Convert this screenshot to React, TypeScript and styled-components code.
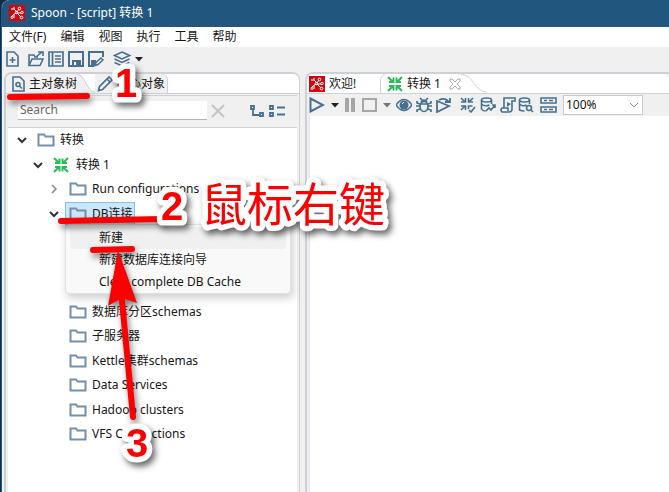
import React from "react";
import styled, { createGlobalStyle } from "styled-components";

const BLUE = "#47708f";
const LINE = "#cfcfd6";
const RED = "#fb0000";

const GlobalStyle = createGlobalStyle`
  *, *::before, *::after { box-sizing: border-box; }
  body {
    margin: 0;
    background: #1b2b3f;
    font: 12px/16px "Noto Sans", "Noto Sans CJK SC", sans-serif;
    color: #161616;
  }
  button, input, select { font: inherit; color: inherit; }
  svg { flex: none; }
`;

const Window = styled.div`
  position: relative;
  display: flex;
  flex-direction: column;
  min-height: 100vh;
  margin-left: 2px;
  overflow: hidden;
  background: #f0f0f0;
  border-top-left-radius: 8px;
  box-shadow: -1px 0 0 #1c5a90;
`;

const TitleBar = styled.header`
  display: flex;
  align-items: center;
  gap: 6px;
  height: 27px;
  padding: 0 7px 2px;
  background: #21567e;
  color: #fff;
  h1 { margin: 0; font-size: 12px; font-weight: 400; }
`;

const MenuBar = styled.nav`
  display: flex;
  align-items: center;
  gap: 14px;
  height: 20px;
  padding: 0 7px;
  background: #fff;
`;

const PlainButton = styled.button`
  display: flex;
  align-items: center;
  flex: none;
  padding: 0;
  border: 0;
  background: none;
  white-space: nowrap;
`;

const MainToolbar = styled.div`
  display: flex;
  align-items: center;
  gap: 4px;
  height: 25px;
  padding: 0 4px 1px;
`;

const Space = styled.span<{ $w: number }>`
  flex: none;
  width: ${(p) => p.$w}px;
`;

const Workspace = styled.main`
  display: flex;
  flex: 1;
  gap: 5px;
  padding-left: 2px;
`;

const Panel = styled.section<{ $side?: boolean }>`
  display: flex;
  flex-direction: column;
  min-width: 0;
  flex: ${(p) => (p.$side ? "0 0 296px" : "1")};
  border: solid ${LINE};
  border-width: ${(p) => (p.$side ? "2px 1px 0 2px" : "2px 0 0 2px")};
  border-radius: ${(p) => (p.$side ? "8px 8px 0 0" : "8px 0 0 0")};
`;

const TabStrip = styled.div`
  display: flex;
  flex: none;
  height: 20px;
  overflow: hidden;
  background: #fff;
  border-bottom: 1px solid ${LINE};
  border-top-left-radius: 6px;
  border-top-right-radius: 6px;
`;

const Tab = styled.button<{ $w: number; $fill?: boolean; $round?: boolean }>`
  display: flex;
  flex: none;
  align-items: center;
  gap: 4px;
  width: ${(p) => p.$w}px;
  padding: 0 0 0 2px;
  border: solid ${LINE};
  border-width: ${(p) => (p.$round ? "0 1px 0 0" : "0")};
  border-top-right-radius: ${(p) => (p.$round ? "6px" : "0")};
  background: ${(p) => (p.$fill ? "#f0f0f0" : "#fff")};
  white-space: nowrap;
`;

const SearchBar = styled.div`
  display: flex;
  align-items: center;
  gap: 4px;
  flex: none;
  height: 32px;
  margin: 1px 2px 0;
  padding: 0 11px 2px 10px;
  border-top: 1px solid ${LINE};
`;

const SearchInput = styled.input`
  flex: 1;
  min-width: 0;
  height: 19px;
  padding: 0 2px 2px;
  border: 0;
  border-bottom: 1px solid #b4b4b4;
  outline: 0;
  background: #fff;
  &::placeholder { color: #686868; opacity: 1; }
`;

const Tree = styled.ul`
  flex: 1;
  margin: 0 2px;
  padding: 0;
  border-top: 1px solid ${LINE};
  background: #fff;
  list-style: none;
`;

const TreeRow = styled.li<{ $level: number }>`
  position: relative;
  display: flex;
  align-items: center;
  gap: 3px;
  height: 24px;
  padding-left: ${(p) => 6 + p.$level * 16}px;
  &:nth-child(even) { height: 25px; }
`;

const Hidden = styled.li`
  height: 73px;
`;

const Twisty = styled.span`
  display: flex;
  justify-content: center;
  flex: none;
  width: 16px;
`;

const NodeLabel = styled.span<{ $selected?: boolean }>`
  display: flex;
  align-items: center;
  gap: 5px;
  height: 23px;
  padding: 0 1px 0 3px;
  border: 1px solid ${(p) => (p.$selected ? "#7fc4f4" : "transparent")};
  background: ${(p) => (p.$selected ? "#cce6fb" : "none")};
  white-space: nowrap;
`;

const ContextMenu = styled.div`
  position: absolute;
  z-index: 2;
  top: 23px;
  left: 57px;
  width: 226px;
  padding: 2px 4px 0;
  border: 1px solid #e2e2e2;
  border-radius: 4px;
  background: #f9f9f9;
  box-shadow: 2px 4px 8px rgba(0, 0, 0, 0.2);
`;

const MenuItem = styled.button<{ $active?: boolean }>`
  display: block;
  width: 100%;
  height: 22px;
  padding: 0 0 0 29px;
  border: 0;
  border-radius: 3px;
  background: ${(p) => (p.$active ? "#f0f0f0" : "none")};
  text-align: left;
`;

const CanvasToolbar = styled.div`
  display: flex;
  align-items: center;
  gap: 2px;
  flex: none;
  height: 22px;
  padding-left: 2px;
`;

const Zoom = styled.span`
  position: relative;
  display: flex;
  align-items: center;
  margin-left: 4px;
  svg { position: absolute; right: 5px; pointer-events: none; }
`;

const ZoomSelect = styled.select`
  width: 80px;
  height: 20px;
  padding: 0 0 0 2px;
  border: 1px solid #c9c9c9;
  border-radius: 0;
  background: #fff;
  appearance: none;
`;

const Canvas = styled.div`
  flex: 1;
  margin-left: 2px;
  border-left: 1px solid #e4e4e8;
  background: #fff;
`;

const Marks = styled.svg`
  position: absolute;
  top: 0;
  left: 0;
  z-index: 5;
  pointer-events: none;
`;

const Stroke = styled.g`
  fill: none;
  stroke: ${RED};
  stroke-width: 6px;
  stroke-linecap: round;
  filter: drop-shadow(2px 4px 3px rgba(0, 0, 0, 0.5));
`;

const Mark = styled.text<{ $cjk?: boolean }>`
  fill: ${RED};
  stroke: #fff;
  stroke-width: 11px;
  stroke-linejoin: round;
  paint-order: stroke fill;
  font-family: ${(p) => (p.$cjk ? '"Noto Sans CJK SC"' : '"Liberation Sans"')}, sans-serif;
  font-size: ${(p) => (p.$cjk ? 46 : 40)}px;
  font-weight: ${(p) => (p.$cjk ? 400 : 700)};
  filter: drop-shadow(3px 4px 3px rgba(0, 0, 0, 0.6));
`;

type IconProps = { children: React.ReactNode; w?: number; h?: number; c?: string; s?: number };
const Icon = ({ children, w = 16, h = 16, c = BLUE, s = 2 }: IconProps) => (
  <svg width={w} height={h} viewBox={`0 0 ${w} ${h}`} fill="none" stroke={c} strokeWidth={s} aria-hidden="true">
    {children}
  </svg>
);

const Logo = () => (
  <Icon c="#fff" s={1}>
    <path d="M0 0h16v16H0z" fill="#d1070f" stroke="none" />
    <path d="M2 4h3l3 3 2-3M2 12l3-3 3-1 4 4M5 9v4M8 8l4 0M5 4V2" />
    <circle cx="10.500" cy="3.500" r="1.300" /><circle cx="13" cy="7.500" r="1.200" />
    <circle cx="12.500" cy="12.500" r="1.300" /><circle cx="7.500" cy="7.500" r="1.200" />
    <circle cx="3" cy="12.500" r="1" />
  </Icon>
);
const Caret = ({ c = "#222" }: { c?: string }) => (
  <Icon w={8} h={6} c="none"><path d="M0 1h8L4 5.500z" fill={c} /></Icon>
);
const Folder = () => (
  <Icon w={18} h={14} c="#7390a6"><path d="M1.500 12.500V1.500H7L8.500 3.500H16.500V12.500Z" /></Icon>
);
const Converge = ({ w = 16 }: { w?: number }) => (
  <Icon c="#2db85a" w={w}>
    <path d="M1 1l5 5M15 1l-5 5M1 15l5-5M15 15l-5-5M2 6h4.500V1.500M14 6H9.500V1.500M2 10h4.500v4.500M14 10H9.500v4.500" />
  </Icon>
);
const Chevron = ({ open }: { open?: boolean }) => (
  <Icon w={10} h={10} c={open ? "#333" : "#888"} s={open ? 2 : 1.5}>
    <path d={open ? "M1 3l4 4 4-4" : "M3 1l4 4-4 4"} />
  </Icon>
);

const NewFile = () => <Icon w={13} s={1.6}><path d="M1 1h7l4 4v10H1zM6.500 6v6M3.500 9h6" /></Icon>;
const OpenFile = () => <Icon s={1.6}><path d="M1 14.500V4h5l1 2h3M1 14.500L4 8h11l-3 6.500zM8 6l6-5M10 1h5v4" /></Icon>;
const ListView = () => <Icon s={1.7}><path d="M1 1h14v14H1zM4.500 1v14M7 5h6M7 8h6M7 11h6" /></Icon>;
const Save = () => (
  <Icon><path d="M1 1h14v14H1z" /><path d="M4 9h9v6H4z" fill={BLUE} stroke="none" /><path d="M6 11h2v3H6z" fill="#fff" stroke="none" /></Icon>
);
const SaveAs = () => (
  <Icon><path d="M15 6V1H1v14h5" /><path d="M3 9h5v5H3z" fill={BLUE} stroke="none" /><path d="M7 14.500l1-3L13 7l2 2-5 4.500z" strokeWidth="1.500" /></Icon>
);
const Layers = () => <Icon w={18} s={1.5}><path d="M9 1l7.500 3.500L9 8 1.500 4.500zM1.500 8L9 11.500 16.500 8M1.500 11.500L9 15l7.500-3.500" /></Icon>;
const DocSearch = () => (
  <Icon w={13} s={1.6}><path d="M1 1h7l4 4v10H1z" /><circle cx="6" cy="8.500" r="2" /><path d="M7.500 10l2.500 2.500" /></Icon>
);
const Pencil = () => <Icon s={1.7}><path d="M1.500 14.500l1-4L12 1l3 3-9.500 9.500zM10 3l3 3" /></Icon>;
const Play = () => <Icon><path d="M1.500 1.500L14 8 1.500 14.500z" /></Icon>;
const Pause = () => <Icon w={11} c="none"><path d="M0 1h4v14H0zM6 1h4v14H6z" fill="#a6a6a6" /></Icon>;
const Stop = () => <Icon c="#a6a6a6"><path d="M1 2h13v12H1z" /></Icon>;
const Eye = () => (
  <Icon><path d="M0 8q8-11 16 0q-8 11-16 0z" strokeWidth="1.500" /><circle cx="8" cy="8" r="4.500" fill={BLUE} stroke="none" /><path d="M6 7l2-2" stroke="#fff" strokeWidth="1" /></Icon>
);
const Bug = () => <Icon s={1.7}><ellipse cx="8" cy="9.500" rx="4" ry="5" /><path d="M5 5q3-4 6 0M4 1l2 2M12 1l-2 2M0 9h4M12 9h4M1 4v2l3 1M15 4v2l-3 1M1 15v-2l3-1M15 15v-2l-3-1M5 7h6" /></Icon>;
const Replay = () => <Icon s={1.8}><path d="M1 4l12 5L1 15zM3 3q6-3 10 2M14 1v4h-5" /></Icon>;
const Verify = () => <Icon s={1.6}><path d="M1 1l4 4M13 1L9 5M1 13l4-4M1 5h4.500V1M13 5H8.500V1M1 9h4.500v4M8.500 12V9h4M9 13l2 2 4-5" /></Icon>;
const DbImpact = () => <Icon s={1.6}><ellipse cx="6.500" cy="3" rx="5" ry="2" /><path d="M1.500 3v9q1 2 4 2M11.500 3v4M1.500 7q3 3 8 1M6 14l3-3 2 2 4-5M12 8h3v3" /></Icon>;
const SqlScript = () => <Icon s={1.6}><path d="M4 11V1h11v3h-3v8q0 3-3 3H2q-2-2 0-4h6v3" /><path d="M7 5l4 2-4 3z" fill={BLUE} stroke="none" /></Icon>;
const DbSearch = () => <Icon s={1.6}><ellipse cx="6.500" cy="3" rx="5" ry="2" /><path d="M1.500 3v10q2 1 5 1M11.500 3v4M1.500 7q3 3 7 1M13 13l2 2" /><circle cx="11" cy="11" r="2.500" /></Icon>;
const Results = () => <Icon w={17} s={1.6}><path d="M1 1h15v5H1zM1 10h15v5H1zM4 3.500h3M9 3.500h4M4 12.500h3M9 12.500h4" /></Icon>;

const menus = ["文件(F)", "编辑", "视图", "执行", "工具", "帮助"];
const lowerNodes = ["数据库分区schemas", "子服务器", "Kettle集群schemas", "Data Services", "Hadoop clusters", "VFS Connections"];

const Tool = ({ label, children }: { label: string; children: React.ReactNode }) => (
  <PlainButton aria-label={label}>{children}</PlainButton>
);

export default function App() {
  return (
    <>
      <GlobalStyle />
      <Window>
        <TitleBar><Logo /><h1>Spoon - [script] 转换 1</h1></TitleBar>
        <MenuBar>{menus.map((m) => <PlainButton key={m}>{m}</PlainButton>)}</MenuBar>
        <MainToolbar>
          <Tool label="New"><NewFile /></Tool>
          <Space $w={1} />
          <Tool label="Open"><OpenFile /></Tool>
          <Tool label="Explore"><ListView /></Tool>
          <Tool label="Save"><Save /></Tool>
          <Tool label="Save as"><SaveAs /></Tool>
          <Space $w={1} />
          <Tool label="Perspective"><Layers /></Tool>
          <Tool label="Perspectives"><Caret /></Tool>
        </MainToolbar>
        <Workspace>
          <Panel $side>
            <TabStrip role="tablist">
              <Tab role="tab" aria-selected $w={71} $fill><Space $w={0} /><DocSearch />主对象树</Tab>
              <Icon w={18} h={19} c={LINE} s={1}>
                <path d="M0 0C9 0 9 18 18 18V19H0z" fill="#f0f0f0" stroke="none" /><path d="M0 .5C9 .5 9 18 18 18" />
              </Icon>
              <Tab role="tab" $w={73} $round $fill><Pencil />核心对象</Tab>
            </TabStrip>
            <SearchBar>
              <SearchInput aria-label="Search" placeholder="Search" />
              <Tool label="Clear"><Icon w={14} h={14} c="#c4c4c4"><path d="M1 1l12 12M13 1L1 13" /></Icon></Tool>
              <Space $w={17} />
              <Tool label="Expand all"><Icon w={15} h={14}><path d="M1 2h3v3H1zM10 9h3v3h-3zM3 5v6h6" strokeWidth="1.800" /></Icon></Tool>
              <Tool label="Collapse all"><Icon w={17} h={14}><path d="M1 2h3v3H1zM1 9h3v3H1zM8 3.500h8M8 10.500h8" strokeWidth="1.800" /></Icon></Tool>
            </SearchBar>
            <Tree>
              <TreeRow $level={0}><Twisty><Chevron open /></Twisty><NodeLabel><Folder />转换</NodeLabel></TreeRow>
              <TreeRow $level={1}><Twisty><Chevron open /></Twisty><NodeLabel><Converge w={18} />转换 1</NodeLabel></TreeRow>
              <TreeRow $level={2}><Twisty><Chevron /></Twisty><NodeLabel><Folder />Run configurations</NodeLabel></TreeRow>
              <TreeRow $level={2}>
                <Twisty><Chevron open /></Twisty>
                <NodeLabel $selected><Folder />DB连接</NodeLabel>
                <ContextMenu role="menu">
                  <MenuItem role="menuitem" $active>新建</MenuItem>
                  <MenuItem role="menuitem">新建数据库连接向导</MenuItem>
                  <MenuItem role="menuitem">Clear complete DB Cache</MenuItem>
                </ContextMenu>
              </TreeRow>
              <Hidden />
              {lowerNodes.map((n) => (
                <TreeRow key={n} $level={2}><Twisty /><NodeLabel><Folder />{n}</NodeLabel></TreeRow>
              ))}
            </Tree>
          </Panel>
          <Panel>
            <TabStrip role="tablist">
              <Tab role="tab" $w={73}><Logo />欢迎!</Tab>
              <Icon w={5} h={19} c={LINE} s={1}><path d="M.5 19V8Q.5 1 5 .5" /></Icon>
              <Tab role="tab" aria-selected $w={76}>
                <Converge />转换 1<Space $w={0} />
                <Icon w={12} h={12} c="#aaa" s={1}><path d="M1 1h2l3 3 3-3h2v2L8 6l3 3v2H9L6 8l-3 3H1V9l3-3-3-3z" /></Icon>
              </Tab>
              <Icon w={26} h={19} c={LINE} s={1}><path d="M0 .5C13 .5 13 18 26 18" /></Icon>
            </TabStrip>
            <CanvasToolbar>
              <Tool label="Run"><Play /></Tool>
              <Space $w={2} />
              <Tool label="Run options"><Caret /></Tool>
              <Space $w={2} />
              <Tool label="Pause"><Pause /></Tool>
              <Space $w={2} />
              <Tool label="Stop"><Stop /></Tool>
              <Space $w={1} />
              <Tool label="Stop options"><Caret c="#777" /></Tool>
              <Space $w={1} />
              <Tool label="Preview"><Eye /></Tool>
              <Space $w={0} />
              <Tool label="Debug"><Bug /></Tool>
              <Space $w={0} />
              <Tool label="Replay"><Replay /></Tool>
              <Space $w={4} />
              <Tool label="Verify"><Verify /></Tool>
              <Space $w={0} />
              <Tool label="Impact"><DbImpact /></Tool>
              <Space $w={0} />
              <Tool label="SQL"><SqlScript /></Tool>
              <Tool label="Explore database"><DbSearch /></Tool>
              <Space $w={2} />
              <Tool label="Results"><Results /></Tool>
              <Zoom>
                <ZoomSelect aria-label="Zoom"><option>100%</option></ZoomSelect>
                <Icon w={8} h={6} c="#888" s={1}><path d="M0 1l4 4 4-4" /></Icon>
              </Zoom>
            </CanvasToolbar>
            <Canvas />
          </Panel>
        </Workspace>
        <Marks width={440} height={480}>
          <Stroke>
            <path d="M8 97L85 96M59 221L160 219M91 250L130 249" />
            <path d="M119 290L131 417" />
            <path d="M116 250L106 306L120 298L135 303Z" fill={RED} stroke="none" />
          </Stroke>
          <Mark x={113} y={97}>1</Mark>
          <Mark x={159} y={220}>2</Mark>
          <Mark $cjk x={199} y={221}>鼠标右键</Mark>
          <Mark x={124} y={457}>3</Mark>
        </Marks>
      </Window>
    </>
  );
}
